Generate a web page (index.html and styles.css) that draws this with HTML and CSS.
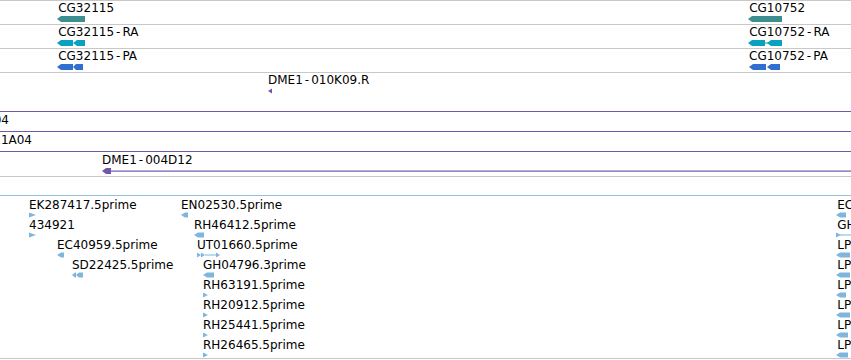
FILE: index.html
```html
<!DOCTYPE html>
<html lang="en">
<head>
    <meta charset="UTF-8">
    <title>Genome tracks</title>
    <link rel="stylesheet" href="styles.css">
</head>
<body>

    <div class="tracks">

        <!-- genes -->
        <div class="track track-row first">
            <div class="feat" style="left:57px;top:0">
                <span class="label">&#8202;CG32115</span>
                <svg class="gene" width="28" height="8"><polygon points="0,4 4,1 28,1 28,7 4,7"/></svg>
            </div>
            <div class="feat" style="left:748px;top:0">
                <span class="label">&#8202;CG10752</span>
                <svg class="gene" width="34" height="8"><polygon points="0,4 4,1 34,1 34,7 4,7"/></svg>
            </div>
        </div>

        <!-- transcripts -->
        <div class="track track-row">
            <div class="feat" style="left:57px;top:0">
                <span class="label">&#8202;CG32115<span class="dash">-</span>RA</span>
                <svg class="mrna" width="28" height="8">
                    <polygon points="0,4 4,1 16,1 16,7 4,7"/>
                    <polygon points="16,4 20,1 28,1 28,7 20,7"/>
                </svg>
            </div>
            <div class="feat" style="left:748px;top:0">
                <span class="label">&#8202;CG10752<span class="dash">-</span>RA</span>
                <svg class="mrna" width="34" height="8">
                    <polygon points="0,4 4,1 17,1 17,7 4,7"/>
                    <rect x="17" y="3.5" width="3" height="1"/>
                    <polygon points="19,4 23,1 34,1 34,7 23,7"/>
                </svg>
            </div>
        </div>

        <!-- proteins -->
        <div class="track track-row">
            <div class="feat" style="left:57px;top:0">
                <span class="label">&#8202;CG32115<span class="dash">-</span>PA</span>
                <svg class="prot" width="26" height="8">
                    <polygon points="0,4 4,1 16,1 16,7 4,7"/>
                    <polygon points="16,4 19,1 26,1 26,7 19,7"/>
                </svg>
            </div>
            <div class="feat" style="left:749px;top:0">
                <span class="label">CG10752<span class="dash">-</span>PA</span>
                <svg class="prot" width="31" height="8">
                    <polygon points="0,4 4,1 17,1 17,7 4,7"/>
                    <polygon points="18,4 22,1 31,1 31,7 22,7"/>
                </svg>
            </div>
        </div>

        <!-- BAC ends -->
        <div class="track track-clones">
            <div class="feat" style="left:268px;top:0">
                <span class="label">DME1<span class="dash">-</span>010K09.R</span>
                <svg class="clone" width="6" height="8"><polygon points="0,4 4,1.5 4,6.5"/></svg>
            </div>

            <div class="span-line clone-line" style="top:38px"></div>

            <div class="feat" style="right:842px;top:40px">
                <span class="label">DME1<span class="dash">-</span>012D04</span>
            </div>
            <div class="span-line clone-line" style="top:58px"></div>

            <div class="feat" style="right:819px;top:60px">
                <span class="label">DME1<span class="dash">-</span>011A04</span>
            </div>
            <div class="span-line clone-line" style="top:78px"></div>

            <div class="feat" style="left:102px;top:80px">
                <span class="label">DME1<span class="dash">-</span>004D12</span>
                <svg class="clone" width="749" height="8">
                    <polygon points="0,4 4,1 9,1 9,7 4,7"/>
                    <rect x="8" y="3.5" width="741" height="1.2"/>
                </svg>
            </div>
        </div>

        <!-- ESTs -->
        <div class="track track-ests">
            <div class="span-line est-line" style="top:18px"></div>

            <div class="feat" style="left:29px;top:21px">
                <span class="label">EK287417.5prime</span>
                <svg class="est" width="7" height="6"><polygon points="0,0.5 7,3 0,5.5"/></svg>
            </div>
            <div class="feat" style="left:29px;top:41px">
                <span class="label">434921</span>
                <svg class="est" width="7" height="6"><polygon points="0,0.5 7,3 0,5.5"/></svg>
            </div>
            <div class="feat" style="left:57px;top:61px">
                <span class="label">EC40959.5prime</span>
                <svg class="est" width="7" height="6"><polygon points="0,3 4,0.5 7,0.5 7,5.5 4,5.5"/></svg>
            </div>
            <div class="feat" style="left:72px;top:81px">
                <span class="label">SD22425.5prime</span>
                <svg class="est" width="11" height="6">
                    <polygon points="0,3 3,0.5 4,0.5 4,5.5 3,5.5"/>
                    <polygon points="4,3 7,0.5 11,0.5 11,5.5 7,5.5"/>
                </svg>
            </div>

            <div class="feat" style="left:181px;top:21px">
                <span class="label">EN02530.5prime</span>
                <svg class="est" width="7" height="6"><polygon points="0,3 4,0.5 7,0.5 7,5.5 4,5.5"/></svg>
            </div>
            <div class="feat" style="left:194px;top:41px">
                <span class="label">RH46412.5prime</span>
                <svg class="est" width="10" height="6"><polygon points="0,3 4,0.5 10,0.5 10,5.5 4,5.5"/></svg>
            </div>
            <div class="feat" style="left:197px;top:61px">
                <span class="label">UT01660.5prime</span>
                <svg class="est" width="23" height="6">
                    <polygon points="0,0.5 4,3 0,5.5"/>
                    <polygon points="4,0.5 8,3 4,5.5"/>
                    <rect x="8" y="2.5" width="12" height="1"/>
                    <polygon points="19,0.5 23,3 19,5.5"/>
                </svg>
            </div>
            <div class="feat" style="left:203px;top:81px">
                <span class="label">GH04796.3prime</span>
                <svg class="est" width="11" height="6"><polygon points="0,3 4,0.5 11,0.5 11,5.5 4,5.5"/></svg>
            </div>
            <div class="feat" style="left:203px;top:101px">
                <span class="label">RH63191.5prime</span>
                <svg class="est" width="5" height="6"><polygon points="0,0.5 5,3 0,5.5"/></svg>
            </div>
            <div class="feat" style="left:203px;top:121px">
                <span class="label">RH20912.5prime</span>
                <svg class="est" width="5" height="6"><polygon points="0,0.5 5,3 0,5.5"/></svg>
            </div>
            <div class="feat" style="left:203px;top:141px">
                <span class="label">RH25441.5prime</span>
                <svg class="est" width="5" height="6"><polygon points="0,0.5 5,3 0,5.5"/></svg>
            </div>
            <div class="feat" style="left:203px;top:161px">
                <span class="label">RH26465.5prime</span>
                <svg class="est" width="5" height="6"><polygon points="0,0.5 5,3 0,5.5"/></svg>
            </div>

            <div class="feat" style="left:836px;top:21px">
                <span class="label">&#8202;EC26713.5prime</span>
                <svg class="est" width="10" height="6"><polygon points="0,3 4,0.5 10,0.5 10,5.5 4,5.5"/></svg>
            </div>
            <div class="feat" style="left:836px;top:41px">
                <span class="label">&#8202;GH13852.5prime</span>
                <svg class="est" width="20" height="6">
                    <polygon points="0,0.5 5,3 0,5.5"/>
                    <rect x="4" y="2.5" width="16" height="1"/>
                </svg>
            </div>
            <div class="feat" style="left:836px;top:61px">
                <span class="label">&#8202;LP04512.5prime</span>
                <svg class="est" width="14" height="6"><polygon points="0,3 4,0.5 14,0.5 14,5.5 4,5.5"/></svg>
            </div>
            <div class="feat" style="left:836px;top:81px">
                <span class="label">&#8202;LP06634.5prime</span>
                <svg class="est" width="14" height="6"><polygon points="0,3 4,0.5 14,0.5 14,5.5 4,5.5"/></svg>
            </div>
            <div class="feat" style="left:836px;top:101px">
                <span class="label">&#8202;LP08871.5prime</span>
                <svg class="est" width="10" height="6"><polygon points="0,3 4,0.5 10,0.5 10,5.5 4,5.5"/></svg>
            </div>
            <div class="feat" style="left:836px;top:121px">
                <span class="label">&#8202;LP10225.5prime</span>
                <svg class="est" width="14" height="6"><polygon points="0,3 4,0.5 14,0.5 14,5.5 4,5.5"/></svg>
            </div>
            <div class="feat" style="left:836px;top:141px">
                <span class="label">&#8202;LP11953.5prime</span>
                <svg class="est" width="12" height="6"><polygon points="0,3 4,0.5 12,0.5 12,5.5 4,5.5"/></svg>
            </div>
            <div class="feat" style="left:836px;top:161px">
                <span class="label">&#8202;LP13407.5prime</span>
                <svg class="est" width="12" height="6"><polygon points="0,3 4,0.5 12,0.5 12,5.5 4,5.5"/></svg>
            </div>
        </div>

    </div>

</body>
</html>
```
FILE: styles.css
```css
body {
    margin: 0;
    font-family: "DejaVu Sans", sans-serif;
    font-size: 12px;
    color: #000;
    background-color: white;
    width: 851px;
    height: 360px;
    overflow: hidden;
}

.tracks {
    display: flex;
    flex-direction: column;
}

.track {
    position: relative;
    overflow: hidden;
    border-bottom: 1px solid #c8c8c8;
}

.track.first {
    border-top: 1px solid #c8c8c8;
}

.track-row {
    height: 23px;
}

.track-clones {
    height: 103px;
}

.track-ests {
    height: 181px;
}

.feat {
    position: absolute;
    white-space: nowrap;
}

.feat .label {
    display: block;
    height: 14px;
    line-height: 14px;
}

/* the labels are drawn with a wide hyphen */
.feat .dash {
    margin: 0 2px;
}

.feat svg {
    display: block;
}

.span-line {
    position: absolute;
    left: 0;
    right: 0;
    height: 1px;
}

/* feature colours */
.gene {
    fill: #3d8e8f;
}

.mrna {
    fill: #0aa0bf;
}

.prot {
    fill: #306ecf;
}

.clone {
    fill: #7356aa;
}

.clone-line {
    background-color: #7259a8;
}

.est {
    fill: #7fb6dd;
}

.est-line {
    background-color: #92c0e2;
}
```
